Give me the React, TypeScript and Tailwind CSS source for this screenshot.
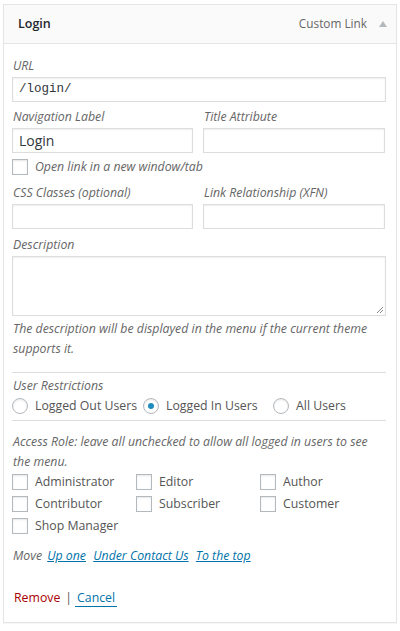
import React from "react";

const font = { fontFamily: '"Open Sans", "Noto Sans", sans-serif' };

function Label({ children }: { children: React.ReactNode }) {
  return <div className="h-[18px] leading-[18px] text-[12.3px] italic text-[#666] mb-[2px] pl-[1px]">{children}</div>;
}

function Input({ value, mono, className = "" }: { value?: string; mono?: boolean; className?: string }) {
  return (
    <div
      className={`h-[25px] border border-[#dddddd] bg-white shadow-[inset_0_1px_2px_rgba(0,0,0,0.07)] flex items-center px-[6px] text-[14px] text-[#32373c] ${className}`}
      style={mono ? { fontFamily: '"Liberation Mono", "DejaVu Sans Mono", monospace', fontSize: 12.5 } : undefined}
    >
      {value}
    </div>
  );
}

function Check({ label }: { label: string }) {
  return (
    <div className="flex items-center h-[22px]">
      <span className="w-[16px] h-[16px] border border-[#b4b9be] bg-white shadow-[inset_0_1px_2px_rgba(0,0,0,0.1)] shrink-0" />
      <span className="ml-[7px] text-[12.3px] text-[#555]">{label}</span>
    </div>
  );
}

function Radio({ label, checked }: { label: string; checked?: boolean }) {
  return (
    <div className="flex items-center">
      <span className="w-[16px] h-[16px] rounded-full border border-[#b4b9be] bg-white shadow-[inset_0_1px_2px_rgba(0,0,0,0.1)] flex items-center justify-center shrink-0">
        {checked && <span className="w-[6px] h-[6px] rounded-full bg-[#1e8cbe]" />}
      </span>
      <span className="ml-[7px] text-[12.3px] text-[#555]">{label}</span>
    </div>
  );
}

export default function App() {
  return (
    <div className="w-[400px] h-[631px] bg-white pt-[4px] pl-[3px]" style={font}>
      <div className="w-[394px] border border-[#e5e5e5] shadow-[0_1px_1px_rgba(0,0,0,0.04)] bg-white">
        <div className="h-[39px] bg-[#fafafa] border-b border-[#e5e5e5] flex items-center pl-[14px] pr-[9px]">
          <span className="text-[12.5px] font-semibold text-[#23282d]">Login</span>
          <span className="ml-auto text-[11.8px] text-[#666]">Custom Link</span>
          <span className="ml-[12px] w-0 h-0 border-l-[4px] border-r-[4px] border-b-[6px] border-l-transparent border-r-transparent border-b-[#b4b9be]" />
        </div>
        <div className="pl-[8px] pr-[10px] pt-[13px] pb-[15px]">
          <Label>URL</Label>
          <Input value="/login/" mono />
          <div className="flex gap-[10px] mt-[6px]">
            <div className="w-[181px]">
              <Label>Navigation Label</Label>
              <Input value="Login" />
            </div>
            <div className="w-[182px]">
              <Label>Title Attribute</Label>
              <Input />
            </div>
          </div>
          <div className="mt-[5px] h-[18px] flex items-center">
            <span className="w-[16px] h-[16px] border border-[#b4b9be] bg-white shadow-[inset_0_1px_2px_rgba(0,0,0,0.1)]" />
            <span className="ml-[7px] text-[12.3px] italic text-[#666]">Open link in a new window/tab</span>
          </div>
          <div className="flex gap-[10px] mt-[8px]">
            <div className="w-[181px]">
              <Label>CSS Classes (optional)</Label>
              <Input />
            </div>
            <div className="w-[182px]">
              <Label>Link Relationship (XFN)</Label>
              <Input />
            </div>
          </div>
          <div className="mt-[7px]">
            <Label>Description</Label>
            <div className="relative h-[60px] border border-[#dddddd] bg-white shadow-[inset_0_1px_2px_rgba(0,0,0,0.07)]">
              <svg className="absolute right-[1px] bottom-[1px]" width="9" height="9" viewBox="0 0 9 9">
                <line x1="8" y1="2" x2="2" y2="8" stroke="#888" strokeWidth="1" />
                <line x1="8" y1="5" x2="5" y2="8" stroke="#888" strokeWidth="1" />
              </svg>
            </div>
          </div>
          <div className="mt-[3px] text-[12.3px] italic text-[#666] leading-[20px] pl-[1px]">
            The description will be displayed in the menu if the current theme supports it.
          </div>
          <div className="mt-[13px] border-t border-[#dddddd]" />
          <div className="mt-[4px] h-[18px] leading-[18px] text-[12.3px] italic text-[#666] pl-[1px]">User Restrictions</div>
          <div className="flex h-[20px] items-center mt-[1px]">
            <div className="w-[131px]"><Radio label="Logged Out Users" /></div>
            <div className="w-[130px]"><Radio label="Logged In Users" checked /></div>
            <div><Radio label="All Users" /></div>
          </div>
          <div className="mt-[4px] border-t border-[#dddddd]" />
          <div className="mt-[11px] text-[12.3px] italic text-[#666] leading-[20px] pl-[1px]">
            Access Role: leave all unchecked to allow all logged in users to see the menu.
          </div>
          <div className="grid grid-cols-[124px_124px_124px] mt-[-1px]">
            <Check label="Administrator" />
            <Check label="Editor" />
            <Check label="Author" />
            <Check label="Contributor" />
            <Check label="Subscriber" />
            <Check label="Customer" />
            <Check label="Shop Manager" />
          </div>
          <div className="mt-[10px] h-[18px] leading-[18px] text-[12.3px] italic pl-[1px] text-[#666]">
            Move{" "}
            <a className="ml-[2px] text-[#0073aa] underline">Up one</a>{" "}
            <a className="ml-[4px] text-[#0073aa] underline">Under Contact Us</a>{" "}
            <a className="ml-[4px] text-[#0073aa] underline">To the top</a>
          </div>
          <div className="mt-[24px] h-[18px] leading-[18px] text-[12.3px] flex items-center pl-[2px]">
            <span className="text-[#a00]">Remove</span>
            <span className="mx-[5px] text-[#555]">|</span>
            <span className="text-[#0073aa] border-b border-[#0073aa] leading-[17px] px-[2px] -ml-[2px]">Cancel</span>
          </div>
        </div>
      </div>
    </div>
  );
}
